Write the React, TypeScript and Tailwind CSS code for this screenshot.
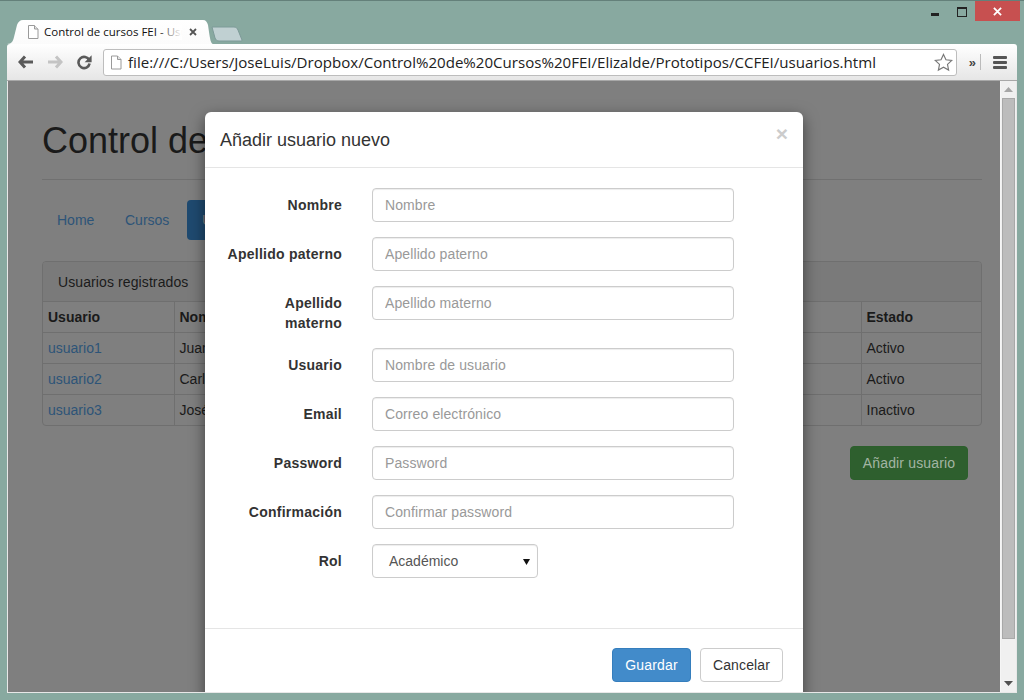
const rows = [
  { user: 'usuario1', name: 'Juan Pérez', status: 'Activo' },
  { user: 'usuario2', name: 'Carlos Ruiz', status: 'Activo' },
  { user: 'usuario3', name: 'José Luis', status: 'Inactivo' },
];

const fields = [
  { label: 'Nombre', placeholder: 'Nombre' },
  { label: 'Apellido paterno', placeholder: 'Apellido paterno' },
  { label: 'Apellido materno', placeholder: 'Apellido materno', wrap: true },
  { label: 'Usuario', placeholder: 'Nombre de usuario' },
  { label: 'Email', placeholder: 'Correo electrónico' },
  { label: 'Password', placeholder: 'Password' },
  { label: 'Confirmación', placeholder: 'Confirmar password' },
];

function FileIcon({ className }: { className: string }) {
  return (
    <svg viewBox="0 0 12 14" className={className}>
      <path d="M1.5.5h6l3.5 3.5v9.5h-9.5z" fill="#fff" stroke="#9a9a9a" />
      <path d="M7.5.5v3.5h3.5" fill="#e4e4e4" stroke="#9a9a9a" />
    </svg>
  );
}

function TitleBar() {
  return (
    <div className="relative h-[43px] shrink-0">
      {/* window controls */}
      <div className="absolute right-[-3px] top-0 flex items-start">
        <div className="mt-[12px] mr-[18px] h-[3px] w-[8px] bg-[#222]" />
        <div className="mt-[6px] mr-[8px] h-[10px] w-[10px] border border-t-2 border-[#222]" />
        <div className="flex h-[20px] w-[45px] items-center justify-center bg-[#c75050]">
          <svg viewBox="0 0 10 10" className="h-[9px] w-[9px]">
            <path d="M1 1l8 8M9 1l-8 8" stroke="#fff" strokeWidth="2" />
          </svg>
        </div>
      </div>
      {/* active tab */}
      <div className="absolute bottom-0 left-0 h-[24px] w-[206px]">
        <svg viewBox="0 0 206 24" className="absolute inset-0 h-full w-full">
          <defs>
            <linearGradient id="tabFill" x1="0" y1="0" x2="0" y2="1">
              <stop offset="0" stopColor="#ffffff" />
              <stop offset="1" stopColor="#fbfbfb" />
            </linearGradient>
          </defs>
          <path d="M0 24c5 0 6-3 7-7l3-12c1-3 3-5 6-5h180c3 0 4 2 5 5l1 7c1 7 2 12 4 12z" fill="url(#tabFill)" />
        </svg>
        <div className="relative flex h-full items-center pl-[20px]">
          <FileIcon className="h-[14px] w-[12px] shrink-0" />
          <div className="relative ml-[5px] w-[138px] overflow-hidden whitespace-nowrap font-['Open_Sans',sans-serif] text-[11.5px] leading-[16px] text-[#111]">
            Control de cursos FEI - Usuarios
            <div className="absolute inset-y-0 right-0 w-[24px] bg-gradient-to-r from-white/0 to-white" />
          </div>
          <svg viewBox="0 0 8 8" className="ml-[7px] h-[8px] w-[8px] shrink-0">
            <path d="M1 1l6 6M7 1l-6 6" stroke="#555" strokeWidth="1.8" />
          </svg>
        </div>
      </div>
      {/* new tab button */}
      <svg viewBox="0 0 32 16" className="absolute left-[204px] top-[25px] h-[16px] w-[32px]">
        <path d="M1 1h22c2 0 3 1 4 3l4 10c0 1-1 1-2 1H8c-2 0-3-1-4-3z" fill="#c0d0d2" stroke="#7d9a98" />
      </svg>
    </div>
  );
}

function Toolbar() {
  return (
    <div className="flex h-[37px] shrink-0 items-center rounded-t-[3px] border-b border-[#a8a8a8] bg-gradient-to-b from-white to-[#e6e6e6] pl-[11px] pr-[10px]">
      <svg viewBox="0 0 16 14" className="h-[14px] w-[16px]">
        <path d="M7 1.5L2 7l5 5.5M2.500 7H15" fill="none" stroke="#5a5a5a" strokeWidth="3" />
      </svg>
      <svg viewBox="0 0 16 14" className="ml-[13px] h-[14px] w-[16px]">
        <path d="M9 1.5L14 7l-5 5.5M13.500 7H1" fill="none" stroke="#c4c4c4" strokeWidth="3" />
      </svg>
      <svg viewBox="0 0 16 16" className="ml-[13px] h-[16px] w-[16px]">
        <path d="M13.2 6.2A5.6 5.6 0 1 0 13.6 9.5" fill="none" stroke="#5a5a5a" strokeWidth="2.6" />
        <path d="M15.6 1.2v7h-7z" fill="#5a5a5a" />
      </svg>
      <div className="ml-[11px] flex h-[27px] w-[854px] items-center rounded-[3px] border border-[#bdbdbd] bg-white pl-[6px] pr-[3px]">
        <FileIcon className="h-[15px] w-[12px] shrink-0" />
        <span className="ml-[6px] grow whitespace-nowrap font-['Open_Sans',sans-serif] text-[15.08px] text-[#222]">
          file:///C:/Users/JoseLuis/Dropbox/Control%20de%20Cursos%20FEI/Elizalde/Prototipos/CCFEI/usuarios.html
        </span>
        <svg viewBox="0 0 20 20" className="h-[19px] w-[19px] shrink-0">
          <path d="M10 1.5l2.6 5.6 6.1.7-4.5 4.2 1.2 6-5.4-3-5.4 3 1.2-6L1.300 7.800l6.100-.7z" fill="#fff" stroke="#777" strokeWidth="1.200" />
        </svg>
      </div>
      <span className="ml-[12px] font-['Liberation_Sans',sans-serif] text-[13px] font-bold leading-none text-[#444]">»</span>
      <div className="ml-[4px] h-[16px] w-px bg-[#bbb]" />
      <div className="ml-[12px] flex flex-col gap-[2px]">
        <div className="h-[3px] w-[14px] rounded-[1px] bg-[#555]" />
        <div className="h-[3px] w-[14px] rounded-[1px] bg-[#555]" />
        <div className="h-[3px] w-[14px] rounded-[1px] bg-[#555]" />
      </div>
    </div>
  );
}

function PageBehind() {
  return (
    <div className="h-full w-[992px] shrink-0 bg-[#7f7f7f] pl-[34px] pr-[18px] pt-[40px]">
      <h1 className="text-[36px] leading-[40px] text-[#1a1a1a]">Control de cursos FEI</h1>
      <div className="mt-[18px] border-t border-[#707070]" />
      <div className="mt-[20px] flex gap-[2px] text-[14px] leading-[20px]">
        <a className="w-[66px] py-[10px] pl-[15px] text-[#2d5478]">Home</a>
        <a className="w-[75px] py-[10px] pl-[15px] text-[#2d5478]">Cursos</a>
        <a className="rounded-[4px] bg-[#1f4a70] px-[15px] py-[10px] text-[#808080]">Usuarios</a>
      </div>
      <div className="mt-[21px] overflow-hidden rounded-[4px] border border-[#6f6f6f]">
        <div className="h-[40px] border-b border-[#6f6f6f] bg-[#7a7a7a] px-[15px] py-[10px] leading-[20px] tracking-[0.1px] text-[#1a1a1a]">
          Usuarios registrados
        </div>
        <table className="w-full table-fixed border-collapse text-[14px] leading-[20px] text-[#1a1a1a]">
          <thead>
            <tr className="h-[30px]">
              <th className="w-[131px] border-r border-b border-[#6f6f6f] px-[5px] text-left font-bold">Usuario</th>
              <th className="border-r border-b border-[#6f6f6f] px-[5px] text-left font-bold">Nombre</th>
              <th className="w-[120px] border-b border-[#6f6f6f] px-[5px] text-left font-bold">Estado</th>
            </tr>
          </thead>
          <tbody>
            {rows.map((row, i) => (
              <tr key={row.user} className="h-[31px]">
                <td className={`border-r border-[#6f6f6f] px-[5px] text-[#2d5478] ${i < 2 ? 'border-b' : ''}`}>{row.user}</td>
                <td className={`border-r border-[#6f6f6f] px-[5px] ${i < 2 ? 'border-b' : ''}`}>{row.name}</td>
                <td className={`border-[#6f6f6f] px-[5px] ${i < 2 ? 'border-b' : ''}`}>{row.status}</td>
              </tr>
            ))}
          </tbody>
        </table>
      </div>
      <div className="mt-[20px] flex justify-end pr-[14px]">
        <button className="h-[34px] w-[118px] rounded-[4px] border border-[#2c5f2c] bg-[#2e5f2e] text-[14px] tracking-[0.15px] text-[#a3b5a3]">
          Añadir usuario
        </button>
      </div>
    </div>
  );
}

function Modal() {
  return (
    <div className="absolute left-[197px] top-[31px] w-[598px] rounded-[6px] bg-white shadow-[0_5px_15px_rgba(0,0,0,0.5)]">
      <div className="flex h-[56px] items-center justify-between border-b border-[#e5e5e5] pl-[15px] pr-[15px]">
        <h4 className="text-[18px] leading-[20px] text-[#333]">Añadir usuario nuevo</h4>
        <span className="-mt-[12px] text-[21px] font-bold leading-none text-[#cccccc]">×</span>
      </div>
      <form className="flex flex-col gap-[15px] px-[15px] pb-[50px] pt-[20px]">
        {fields.map((field) => (
          <div key={field.label} className="flex items-start">
            <label className="w-[122px] pt-[7px] text-right text-[14px] font-bold leading-[20px] tracking-[0.25px] text-[#333]">
              {field.wrap ? (
                <>
                  Apellido
                  <br />
                  materno
                </>
              ) : (
                field.label
              )}
            </label>
            <input
              placeholder={field.placeholder}
              className="ml-[30px] h-[34px] w-[362px] rounded-[4px] border border-[#ccc] px-[12px] text-[14px] tracking-[0.1px] shadow-[inset_0_1px_1px_rgba(0,0,0,0.075)] outline-none placeholder:text-[#999]"
            />
          </div>
        ))}
        <div className="flex items-start">
          <label className="w-[122px] pt-[7px] text-right text-[14px] font-bold leading-[20px] tracking-[0.25px] text-[#333]">
            Rol
          </label>
          <div className="ml-[30px] flex h-[34px] w-[166px] items-center justify-between rounded-[4px] border border-[#ccc] pl-[16px] pr-[7px] text-[14px] text-[#555] shadow-[inset_0_1px_1px_rgba(0,0,0,0.075)]">
            <span>Académico</span>
            <svg viewBox="0 0 7 7" className="h-[7px] w-[7px]">
              <path d="M0 1h7L3.500 7z" fill="#111" />
            </svg>
          </div>
        </div>
      </form>
      <div className="flex justify-end gap-[9px] border-t border-[#e5e5e5] px-[20px] py-[19px] text-[14px] tracking-[0.15px]">
        <button className="h-[34px] w-[79px] rounded-[4px] border border-[#357ebd] bg-[#428bca] text-white">Guardar</button>
        <button className="h-[34px] w-[83px] rounded-[4px] border border-[#ccc] bg-white text-[#333]">Cancelar</button>
      </div>
    </div>
  );
}

function Scrollbar() {
  return (
    <div className="flex w-[17px] shrink-0 flex-col items-start border-l border-[#f5f5f5] bg-[#f0f0f0] pl-px">
      <svg viewBox="0 0 9 5" className="ml-[2px] mt-[6px] h-[5px] w-[9px]">
        <path d="M4.500 0L9 5H0z" fill="#a6a6a6" />
      </svg>
      <div className="mt-[6px] h-[541px] w-[13px] border border-[#a8a8a8] bg-[#bcbcbc]" />
      <svg viewBox="0 0 9 5" className="ml-[2px] mt-auto mb-[6px] h-[5px] w-[9px]">
        <path d="M0 0h9L4.500 5z" fill="#505050" />
      </svg>
    </div>
  );
}

export default function App() {
  return (
    <div className="flex h-[700px] w-[1024px] flex-col overflow-hidden border-t border-[#64807a] bg-[#88a9a0] px-[7px] pb-[7px] font-['Liberation_Sans',Arial,sans-serif] text-[14px]">
      <TitleBar />
      <Toolbar />
      <div className="relative flex min-h-0 grow overflow-hidden border-b border-l border-r border-[#e8e8e8]">
        <PageBehind />
        <Modal />
        <Scrollbar />
      </div>
    </div>
  );
}
